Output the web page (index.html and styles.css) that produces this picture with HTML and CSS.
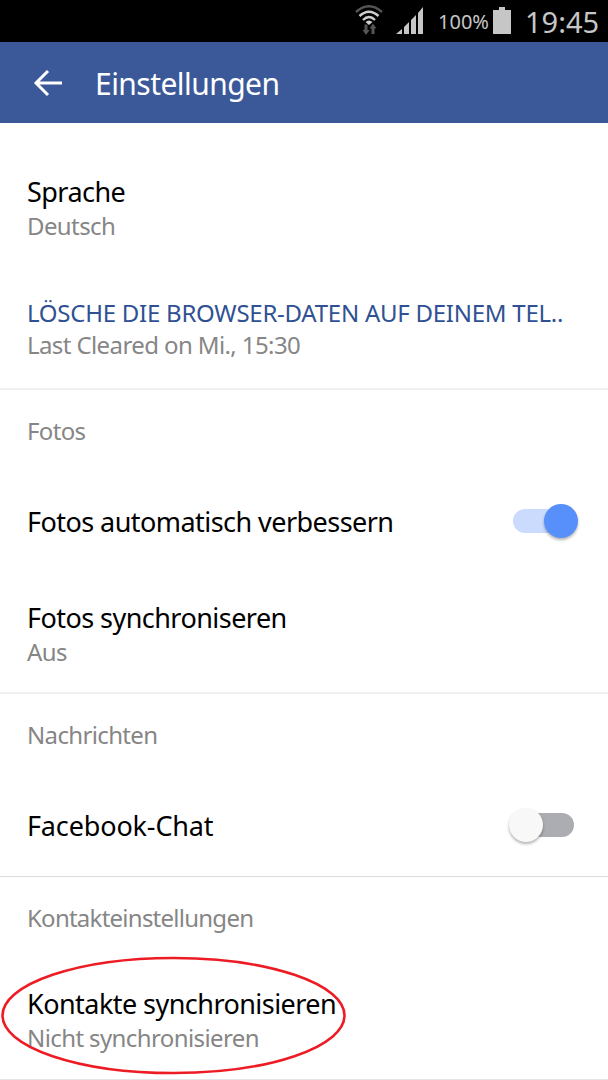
FILE: index.html
```
<!DOCTYPE html>
<html lang="de">
<head>
    <meta charset="UTF-8">
    <meta name="viewport" content="width=device-width, initial-scale=1.0">
    <title>Einstellungen</title>
    <link rel="stylesheet" href="styles.css">
</head>
<body>
    <div class="statusbar">
        <svg class="wifi" width="28" height="31" viewBox="0 0 28 31" fill="none">
            <path d="M1 7 Q14 -4.500 27 7" stroke="#555" stroke-width="2.4"/>
            <path d="M4.500 11 Q14 2.500 23.500 11" stroke="#cfcfcf" stroke-width="2.4"/>
            <path d="M8 15 Q14 9 20 15" stroke="#cfcfcf" stroke-width="2.4"/>
            <path d="M10.500 17 Q14 14 17.500 17 L14 20 Z" fill="#cfcfcf"/>
            <path d="M9.5 19.500 h3 v5.500 h2 l-3.500 5 l-3.500 -5 h2 z M16.500 29 h3 v-5.500 h2 l-3.500 -5 l-3.500 5 h2 z" fill="#555"/>
        </svg>
        <svg class="signal" width="28" height="28" viewBox="0 0 28 28" fill="#c6c6c6">
            <path d="M0 27 L6 22 V27 Z M8 20 L13 15 V27 H8 Z M15 13 L20 8 V27 H15 Z M22 6 L27 0 V27 H22 Z"/>
        </svg>
        <span class="percent">100%</span>
        <svg class="battery" width="18" height="27" viewBox="0 0 18 27" fill="#c6c6c6">
            <path d="M6 0 H12 V3 H18 V27 H0 V3 H6 Z"/>
        </svg>
        <span class="clock">19:45</span>
    </div>
    <div class="header">
        <svg class="back" width="30" height="28" viewBox="0 0 30 28" fill="none" stroke="#fff" stroke-width="3">
            <path d="M29 14 H3 M15 2 L3 14 L15 26"/>
        </svg>
        <h1>Einstellungen</h1>
    </div>

    <div class="section general">
        <div class="item">
            <div class="title">Sprache</div>
            <div class="sub">Deutsch</div>
        </div>
        <div class="item browser">
            <div class="link">LÖSCHE DIE BROWSER-DATEN AUF DEINEM TEL..</div>
            <div class="sub">Last Cleared on Mi., 15:30</div>
        </div>
    </div>

    <div class="section photos">
        <h2>Fotos</h2>
        <div class="item row">
            <div class="title">Fotos automatisch verbessern</div>
            <div class="switch on"><div class="knob"></div></div>
        </div>
        <div class="item">
            <div class="title">Fotos synchroniseren</div>
            <div class="sub">Aus</div>
        </div>
    </div>

    <div class="section messages">
        <h2>Nachrichten</h2>
        <div class="item row">
            <div class="title chat">Facebook-Chat</div>
            <div class="switch"><div class="knob"></div></div>
        </div>
    </div>

    <div class="section contacts">
        <h2>Kontakteinstellungen</h2>
        <div class="item marked">
            <div class="title">Kontakte synchronisieren</div>
            <div class="sub">Nicht synchronisieren</div>
            <svg class="ring" width="346" height="120" viewBox="0 0 346 120" fill="none">
                <ellipse cx="173.500" cy="60.500" rx="171" ry="57.500" stroke="#ed1c24" stroke-width="2.6"/>
            </svg>
        </div>
    </div>
</body>
</html>
```
FILE: styles.css
```
* {
    box-sizing: border-box;
}
body {
    margin: 0;
    height: 1080px;
    overflow: hidden;
    background: #fff;
    font-family: 'Noto Sans', sans-serif;
    color: #000;
}
.statusbar {
    display: flex;
    align-items: center;
    height: 42px;
    padding-left: 355px;
    background: #000;
    color: #c6c6c6;
    white-space: nowrap;
}
.wifi {
    margin-top: -2px;
}
.signal {
    margin-left: 13px;
}
.percent {
    width: 51px;
    margin-left: 14px;
    font-size: 20px;
}
.battery {
    margin-left: 4px;
    margin-top: -2px;
}
.clock {
    margin-left: 14px;
    font-size: 29px;
}
.header {
    display: flex;
    align-items: center;
    height: 81px;
    padding-left: 33px;
    background: #3b5998;
    color: #fff;
}
.back {
    margin-top: 1px;
}
h1 {
    margin: 2px 0 0 32px;
    font-size: 30px;
    font-weight: 400;
    letter-spacing: -0.55px;
}
.section {
    padding: 0 27px;
    border-bottom: 2px solid #f0f0f0;
}
.general {
    height: 267px;
    padding-top: 51px;
}
.photos {
    height: 304px;
    padding-top: 25px;
}
.messages {
    height: 183px;
    padding-top: 25px;
    border-bottom: 1px solid #dcdcdc;
}
.contacts {
    height: 203px;
    padding-top: 25px;
    border-bottom: 1px solid #e4e4e4;
}
h2 {
    margin: 0 0 57px;
    font-size: 24px;
    font-weight: 400;
    line-height: 32px;
    letter-spacing: -0.65px;
    color: #868686;
}
.contacts h2 {
    margin-bottom: 52px;
    letter-spacing: -0.75px;
}
.title {
    font-size: 27px;
    line-height: 36px;
    letter-spacing: -0.55px;
    white-space: nowrap;
}
.title.chat {
    letter-spacing: -0.15px;
}
.sub {
    margin-top: -1px;
    font-size: 24px;
    line-height: 34px;
    letter-spacing: -0.6px;
    color: #868686;
}
.link {
    font-size: 24px;
    line-height: 32px;
    letter-spacing: -0.25px;
    color: #2f5193;
    white-space: nowrap;
}
.browser {
    margin-top: 54px;
}
.browser .sub {
    margin-top: 0;
    line-height: 32px;
}
.row {
    display: flex;
    justify-content: space-between;
    align-items: center;
}
.photos .row {
    margin-bottom: 60px;
}
/* switches */
.switch {
    display: flex;
    align-items: center;
    width: 61px;
    height: 24px;
    margin-right: 7px;
    margin-bottom: 2px;
    border-radius: 12px;
    background: #abadb2;
}
.knob {
    flex: none;
    width: 34px;
    height: 34px;
    margin-left: -4px;
    border-radius: 50%;
    background: #f8f8f8;
    box-shadow: 0 2px 3px rgba(0, 0, 0, 0.3);
}
.switch.on {
    justify-content: flex-end;
    background: #cbdbfe;
}
.switch.on .knob {
    margin-right: -4px;
    background: #578ffb;
}
/* red marker over the last item */
.marked {
    position: relative;
}
.ring {
    position: absolute;
    left: -27px;
    top: -31px;
}
```
